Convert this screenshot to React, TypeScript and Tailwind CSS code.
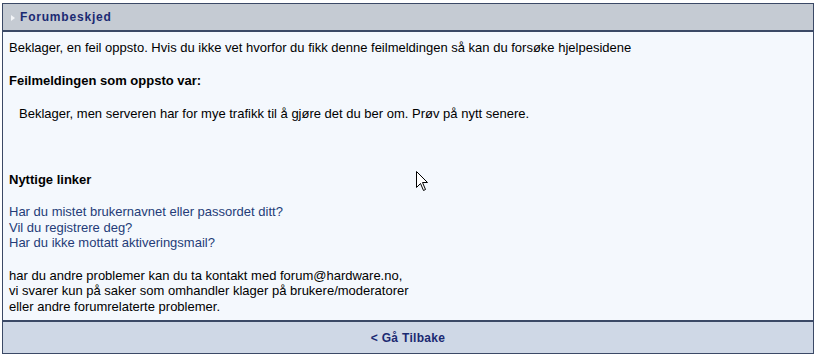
export default function App() {
  return (
    <div className="w-[818px] h-[357px] bg-white pt-[3px] pl-[2px]" style={{ fontFamily: '"Liberation Sans", Arial, sans-serif' }}>
      <div className="relative w-[812px] border border-[#3b4966] bg-[#f4f8fd]">
        <div className="h-[28px] flex items-center bg-[#c5cbd3] border-b-2 border-[#3b4966] pl-[8px]">
          <svg width="4" height="6" viewBox="0 0 4 6" className="mr-[5px] mt-[1px]">
            <path d="M0 0 L4 3 L0 6 Z" fill="#f3f5f8" />
          </svg>
          <span className="text-[12px] font-bold tracking-[0.8px] text-[#1b2a72]">Forumbeskjed</span>
        </div>

        <div className="h-[288px] px-[6px] pt-[8px] text-[13px] leading-[15.5px] text-black">
          <p>Beklager, en feil oppsto. Hvis du ikke vet hvorfor du fikk denne feilmeldingen så kan du forsøke hjelpesidene</p>
          <p className="mt-[17px] font-bold">Feilmeldingen som oppsto var:</p>
          <p className="mt-[18px] pl-[10px]">Beklager, men serveren har for mye trafikk til å gjøre det du ber om. Prøv på nytt senere.</p>
          <p className="mt-[50px] font-bold">Nyttige linker</p>
          <div className="mt-[17px] text-[#243c78]">
            <p>Har du mistet brukernavnet eller passordet ditt?</p>
            <p>Vil du registrere deg?</p>
            <p>Har du ikke mottatt aktiveringsmail?</p>
          </div>
          <div className="mt-[17px]">
            <p>har du andre problemer kan du ta kontakt med forum@hardware.no,</p>
            <p>vi svarer kun på saker som omhandler klager på brukere/moderatorer</p>
            <p>eller andre forumrelaterte problemer.</p>
          </div>
        </div>

        <div className="h-[33px] flex items-center justify-center bg-[#cfd8e6] border-t-2 border-[#3b4966]">
          <span className="text-[12px] font-bold text-[#1b2a72] tracking-[0.3px]">&lt; Gå Tilbake</span>
        </div>

        <svg width="13" height="21" viewBox="0 0 13 21" className="absolute left-[413px] top-[167px]">
          <path d="M0.5 0.5 L0.5 16.5 L4.5 12.5 L7.5 19.5 L9.5 18.5 L6.5 11.5 L11.5 11.5 Z" fill="#ffffff" stroke="#000000" strokeWidth="1" />
        </svg>
      </div>
    </div>
  );
}
